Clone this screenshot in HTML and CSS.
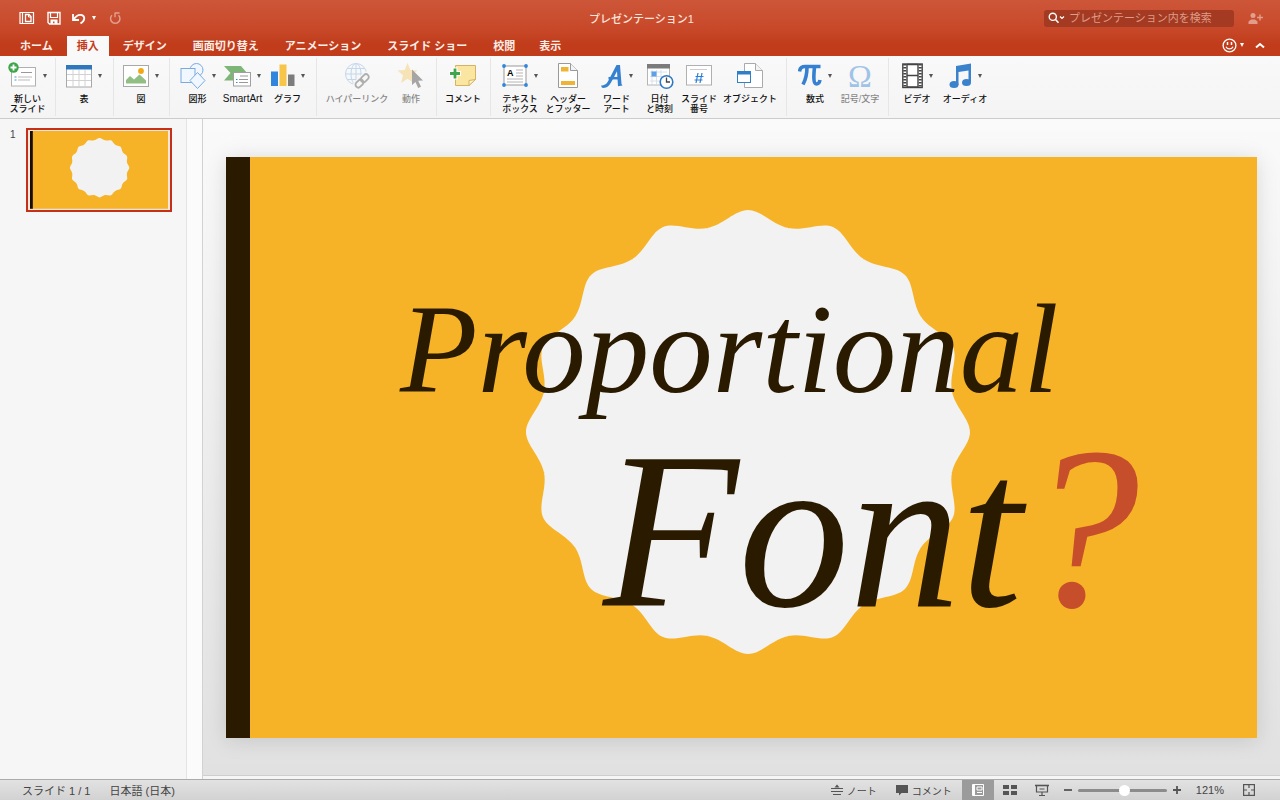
FILE: index.html
```html
<!DOCTYPE html>
<html lang="ja">
<head>
<meta charset="utf-8">
<title>プレゼンテーション1</title>
<link rel="stylesheet" href="styles.css">
</head>
<body>
<header class="titlebar">
  <div class="top-row">
    <div class="quick-access">
      <button class="icon-button" aria-label="テンプレート"><svg width="16" height="14" viewBox="0 0 16 14"><path d="M1 1.500h13.500v11H1zM3.500 1.500v11" fill="none" stroke="#fff" stroke-width="1.200"/><path d="M6.500 3.500H10l2 2v5H6.500z" fill="none" stroke="#fff" stroke-width="1.300"/><path d="M9.500 3.500V6H12" fill="none" stroke="#fff"/></svg></button>
      <button class="icon-button" aria-label="保存"><svg width="14" height="14" viewBox="0 0 14 14"><path d="M1 1.500h12v11.500H2.500L1 11.500z" fill="none" stroke="#fff" stroke-width="1.400"/><path d="M3.500 1.500v5h7v-5" fill="none" stroke="#fff" stroke-width="1.200"/><path d="M3.500 8.500h7V13H7.500v-2.500H6V13H3.500z" fill="#fff"/></svg></button>
      <button class="icon-button" aria-label="元に戻す"><svg width="15" height="13" viewBox="0 0 15 13"><path d="M2 2v6h6" fill="none" stroke="#fff" stroke-width="1.800"/><path d="M2.500 7.500C5 4 8 2 11 3.200c3 1.300 3.500 5-1.500 8.300" fill="none" stroke="#fff" stroke-width="1.800"/></svg></button>
      <span class="caret caret-light"></span>
      <button class="icon-button dim" aria-label="繰り返し"><svg width="13" height="14" viewBox="0 0 13 14"><path d="M3 4.200a4.700 4.700 0 1 0 6.500 0" fill="none" stroke="#fff" stroke-width="1.500"/><path d="M6 1.500v4.800M6 2h4.500" fill="none" stroke="#fff" stroke-width="1.400"/></svg></button>
    </div>
    <h1 class="doc-title">プレゼンテーション1</h1>
    <div class="top-right">
      <label class="search">
        <svg width="17" height="12" viewBox="0 0 17 12"><circle cx="4.800" cy="4.800" r="3.600" fill="none" stroke="#fff" stroke-width="1.400"/><path d="M7.500 7.500l3 3.300" stroke="#fff" stroke-width="1.600"/><path d="M12 4.500l2 2 2-2" fill="none" stroke="#fff" stroke-width="1.200"/></svg>
        <input class="search-input" type="text" aria-label="プレゼンテーション内を検索" placeholder="プレゼンテーション内を検索">
      </label>
      <button class="icon-button dim" aria-label="共有"><svg width="16" height="13" viewBox="0 0 16 13"><circle cx="5" cy="3.500" r="2.500" fill="#fff"/><path d="M.5 12V9.500L3 7.500h4l2.500 2V12z" fill="#fff"/><path d="M12 2.500v6M9 5.500h6" stroke="#fff" stroke-width="1.400"/></svg></button>
    </div>
  </div>
  <div class="tab-row">
    <nav class="tabs">
      <button class="tab">ホーム</button>
      <button class="tab tab-active">挿入</button>
      <button class="tab">デザイン</button>
      <button class="tab tab-wide">画面切り替え</button>
      <button class="tab">アニメーション</button>
      <button class="tab tab-wide">スライド ショー</button>
      <button class="tab">校閲</button>
      <button class="tab">表示</button>
    </nav>
    <div class="tab-tools">
      <button class="icon-button" aria-label="フィードバック"><svg width="15" height="15" viewBox="0 0 15 15"><circle cx="7.500" cy="7.500" r="6.400" fill="none" stroke="#fff" stroke-width="1.300"/><path d="M5.500 4v3M9.500 4v3" stroke="#fff" stroke-width="1.500"/><path d="M4 8.700c1.500 3 5.500 3 7 0" fill="none" stroke="#fff" stroke-width="1.300"/></svg></button>
      <span class="caret caret-light"></span>
      <button class="icon-button collapse" aria-label="リボンを折りたたむ"><svg width="10" height="7" viewBox="0 0 10 7"><path d="M1 5.500l4-3.500 4 3.500" fill="none" stroke="#fff" stroke-width="2"/></svg></button>
    </div>
  </div>
</header>

<div class="ribbon">
  <div class="group">
    <button class="tool w-55"><span class="tool-icon"><svg width="29" height="28" viewBox="0 0 29 28"><rect x="3.500" y="5.500" width="24" height="18.500" fill="#fff" stroke="#b0b0b0"/><path d="M13 10.500h11" stroke="#999"/><path d="M6.500 15h2M6.500 18h2" stroke="#4a90d9"/><path d="M10 15h14M10 18h12" stroke="#bbb"/><circle cx="5.500" cy="5.500" r="5.200" fill="#3fa54a"/><path d="M5.500 2.500v6M2.500 5.500h6" stroke="#fff" stroke-width="1.800"/></svg><span class="caret"></span></span><span class="tool-label">新しい<br>スライド</span></button>
  </div>
  <div class="group">
    <button class="tool w-58"><span class="tool-icon"><svg width="26" height="28" viewBox="0 0 26 28"><rect x=".5" y="3.500" width="25" height="21.500" fill="#fff" stroke="#a8a8a8"/><path d="M0 3h26v4.500H0z" fill="#2f78bd"/><path d="M1 12.500h24M1 18.500h24M7 8v16.500M13 8v16.500M19 8v16.500" stroke="#d2d2d2"/></svg><span class="caret"></span></span><span class="tool-label">表</span></button>
  </div>
  <div class="group">
    <button class="tool w-56"><span class="tool-icon"><svg width="26" height="28" viewBox="0 0 26 28"><rect x=".5" y="3.500" width="25" height="21" fill="#fff" stroke="#a8a8a8"/><path d="M3 21.500V18l4-4 4 3.500 5.500-5 6.500 6v3z" fill="#91bf83"/><circle cx="18" cy="9" r="2.900" fill="#f0a818"/></svg><span class="caret"></span></span><span class="tool-label">図</span></button>
  </div>
  <div class="group group-pad">
    <button class="tool w-45"><span class="tool-icon"><svg width="26" height="28" viewBox="0 0 26 28"><g fill="#f1f7fe" stroke="#7aabe0"><circle cx="16.500" cy="8" r="6.500"/><rect x="1" y="6.500" width="14" height="14"/><path d="M17.500 10.500l7.500 8-7.500 8-7.500-8z"/></g></svg><span class="caret"></span></span><span class="tool-label">図形</span></button>
    <button class="tool w-45"><span class="tool-icon"><svg width="27" height="28" viewBox="0 0 27 28"><path d="M0 4h17l6 7-6 7.500H0L6.500 11z" fill="#7eb678"/><rect x="9.500" y="10.500" width="17" height="13.500" fill="#fff" stroke="#a0a0a0"/><path d="M16 14h8M15 17.500h9M15 20.500h9" stroke="#999"/><path d="M12 17.500h1.500M12 20.500h1.500" stroke="#3a87d6"/></svg><span class="caret"></span></span><span class="tool-label tool-label-latin">SmartArt</span></button>
    <button class="tool w-45"><span class="tool-icon"><svg width="24" height="28" viewBox="0 0 24 28"><path d="M0 9.500h7V24H0z" fill="#2f86dc"/><path d="M8.500 2.500h7V24h-7z" fill="#f7c548"/><path d="M17 12.500h6.500V24H17z" fill="#7c7c7c"/></svg><span class="caret"></span></span><span class="tool-label">グラフ</span></button>
  </div>
  <div class="group group-pad">
    <button class="tool w-70" disabled><span class="tool-icon"><svg width="27" height="28" viewBox="0 0 27 28"><g fill="none" stroke="#8fb9e6"><circle cx="12" cy="12" r="10.500"/><ellipse cx="12" cy="12" rx="5" ry="10.500"/><path d="M12 1.500v21M1.500 12h21M3 6.500h18M3 17.500h18"/></g><path d="M14 23l8.500-8.500" stroke="#f7f7f7" stroke-width="10" stroke-linecap="round"/><g fill="none" stroke="#666" stroke-width="1.800"><rect x="-4.500" y="-2.800" width="9" height="5.600" rx="2.800" transform="translate(15.500 21.500) rotate(-45)"/><rect x="-4.500" y="-2.800" width="9" height="5.600" rx="2.800" transform="translate(20.800 16.200) rotate(-45)"/></g></svg></span><span class="tool-label">ハイパーリンク</span></button>
    <button class="tool w-38" disabled><span class="tool-icon"><svg width="28" height="28" viewBox="0 0 28 28"><path d="M10.500 1l2.800 7 7.200.5-5.500 4.800 1.800 7.700-6.300-4.200L4.200 21 6 13.300.5 8.500 7.700 8z" fill="#f5cf78"/><path d="M15 7.500l11 11-4.800.2 2.800 6-2.800 1.300-2.700-6L15 23z" fill="#555"/></svg></span><span class="tool-label">動作</span></button>
  </div>
  <div class="group">
    <button class="tool w-54"><span class="tool-icon"><svg width="28" height="28" viewBox="0 0 28 28"><path d="M6.500 3.500h20v14l-6.500 6H6.500z" fill="#fae6a0" stroke="#d4b462"/><path d="M26.500 17.500L20 18.500v5z" fill="#fff4cb" stroke="#d4b462"/><path d="M6 5.500v12M0 11.500h12" stroke="#fff" stroke-width="5"/><path d="M6 6.500v10M1 11.500h10" stroke="#3fa54a" stroke-width="2.800"/></svg></span><span class="tool-label">コメント</span></button>
  </div>
  <div class="group group-pad">
    <button class="tool w-48"><span class="tool-icon"><svg width="26" height="28" viewBox="0 0 26 28"><rect x="2" y="4" width="22" height="19" fill="#fff" stroke="#999"/><path d="M14 8h7M14 11h7M14 14h7M5 17h16M5 20h16" stroke="#b4b4b4"/><text x="5" y="14" class="glyph-small">A</text><g fill="#2f86dc"><circle cx="2" cy="4" r="1.900"/><circle cx="24" cy="4" r="1.900"/><circle cx="2" cy="23" r="1.900"/><circle cx="24" cy="23" r="1.900"/></g></svg><span class="caret"></span></span><span class="tool-label">テキスト<br>ボックス</span></button>
    <button class="tool w-48"><span class="tool-icon"><svg width="22" height="28" viewBox="0 0 22 28"><path d="M1.500 1.500h12l7 7v17h-19z" fill="#fff" stroke="#999"/><path d="M13.500 1.500v7h7" fill="#f4f4f4" stroke="#999"/><path d="M4 5h7.500v4.500H4zM4 19h14v4H4z" fill="#efb433"/></svg></span><span class="tool-label">ヘッダー<br>とフッター</span></button>
    <button class="tool w-49"><span class="tool-icon"><svg width="22" height="28" viewBox="0 0 22 28"><path d="M0 23.500c4.500 0 6-2 8.500-7L15.500 3h3.500l1.500 19 1 1.500-4.500.8-1-15-5 9.500c-3 6-5.500 7.500-10 7z" fill="#3580d0"/><path d="M7.500 16.200h10" stroke="#3580d0" stroke-width="2.500"/></svg><span class="caret"></span></span><span class="tool-label">ワード<br>アート</span></button>
    <button class="tool w-37"><span class="tool-icon"><svg width="28" height="28" viewBox="0 0 28 28"><rect x="1.500" y="3" width="22" height="20" fill="#fff" stroke="#b5b5b5"/><path d="M1 2h23v4.500H1z" fill="#7b7b7b"/><path d="M4 10h17M4 14.500h17M4 19h17M6 8v15M10.500 8v15M15 8v15" stroke="#cfdae6" stroke-width=".800"/><path d="M5.500 9.500h5v5h-5z" fill="#5fa1e6"/><circle cx="20.500" cy="20" r="6.300" fill="#fff" stroke="#2d79c4" stroke-width="1.600"/><path d="M20.500 15.500V20H24" fill="none" stroke="#444" stroke-width="1.300"/></svg></span><span class="tool-label">日付<br>と時刻</span></button>
    <button class="tool w-42"><span class="tool-icon"><svg width="26" height="28" viewBox="0 0 26 28"><rect x=".5" y="3.500" width="25" height="19.500" fill="#fff" stroke="#b0b0b0"/><path d="M4 7.500h17" stroke="#ccc"/><path d="M12 11l-2 10M16 11l-2 10M9.500 14.500h8M8.500 18h8" fill="none" stroke="#2f7fd3" stroke-width="1.200"/></svg></span><span class="tool-label">スライド<br>番号</span></button>
    <button class="tool w-60"><span class="tool-icon"><svg width="28" height="28" viewBox="0 0 28 28"><path d="M8.500 1.500h11l7 7v17h-18z" fill="#fff" stroke="#aaa"/><path d="M19.500 1.500v7h7" fill="#f4f4f4" stroke="#aaa"/><rect x="1.500" y="9.500" width="13" height="11" fill="#fff" stroke="#2f7fc9"/><path d="M1 9h14v3.500H1z" fill="#2f7fc9"/></svg></span><span class="tool-label">オブジェクト</span></button>
  </div>
  <div class="group group-pad">
    <button class="tool w-46"><span class="tool-icon"><svg width="24" height="28" viewBox="0 0 24 28"><path d="M1.500 9.500C2 5.500 4 4.500 7 4.500h15.500" fill="none" stroke="#3580d0" stroke-width="3.600"/><path d="M9 5c0 8-1 12-4 17.500M16.500 5c-.800 8-1.500 17 2 17 2 0 3-1.500 3.500-4" fill="none" stroke="#3580d0" stroke-width="3.600" stroke-linejoin="round"/></svg><span class="caret"></span></span><span class="tool-label">数式</span></button>
    <button class="tool w-44" disabled><span class="tool-icon glyph-omega">Ω</span><span class="tool-label">記号/文字</span></button>
  </div>
  <div class="group group-pad">
    <button class="tool w-46"><span class="tool-icon"><svg width="21" height="28" viewBox="0 0 21 28"><rect x=".8" y="2" width="19.400" height="23.500" fill="#fff" stroke="#444" stroke-width="1.400"/><path d="M2.800 2v23.500M18.200 2v23.500" stroke="#444" stroke-width="3" stroke-dasharray="1.500 1.500"/><path d="M5 2v23.500M16 2v23.500M5 13.500h11M5 2.500h11M5 25h11" stroke="#444" stroke-width="1.400"/></svg><span class="caret"></span></span><span class="tool-label">ビデオ</span></button>
    <button class="tool w-50"><span class="tool-icon"><svg width="23" height="28" viewBox="0 0 23 28"><path d="M7 4l15-2.500v19h-2.500V8.500L9.500 10v13H7z" fill="#3a82cc"/><ellipse cx="5" cy="22.500" rx="4.500" ry="3.500" fill="#3a82cc"/><ellipse cx="17.500" cy="20.500" rx="4.500" ry="3.500" fill="#3a82cc"/></svg><span class="caret"></span></span><span class="tool-label">オーディオ</span></button>
  </div>
</div>

<main class="workspace">
  <aside class="thumbnails">
    <span class="thumb-number">1</span>
    <button class="thumb" aria-label="スライド 1">
      <svg class="thumb-art" viewBox="0 0 1031 581"><rect width="1031" height="581" fill="#f7b327"/><rect width="21" height="581" fill="#180d00"/><use href="#seal" x="520" y="275" fill="#f2f2f2"/></svg>
    </button>
  </aside>
  <div class="splitter"></div>
  <section class="stage">
    <svg class="slide" viewBox="0 0 1031 581">
      <defs>
        <path id="lobe" d="M0 0L-40.600-204C-25-207-13-222 0-222S25-207 40.600-204Z"/>
        <g id="quarter"><use href="#lobe"/><use href="#lobe" transform="rotate(22.500)"/><use href="#lobe" transform="rotate(45)"/><use href="#lobe" transform="rotate(67.500)"/></g>
        <g id="seal"><circle r="207"/><use href="#quarter"/><use href="#quarter" transform="rotate(90)"/><use href="#quarter" transform="rotate(180)"/><use href="#quarter" transform="rotate(270)"/></g>
      </defs>
      <rect width="1031" height="581" fill="#f7b327"/>
      <rect width="24" height="581" fill="#291a00"/>
      <use href="#seal" x="522" y="275" fill="#f2f2f2"/>
      <text class="slide-line-1" x="174" y="235">Proportional</text>
      <text class="slide-line-2" x="377" y="449">Font</text>
      <text class="slide-mark" x="798" y="449">?</text>
    </svg>
  </section>
</main>

<footer class="status">
  <span>スライド 1 / 1</span>
  <span>日本語 (日本)</span>
  <div class="status-right">
    <button class="status-button"><svg width="12" height="12" viewBox="0 0 12 12"><path d="M3.500 3.500L6 .5l2.500 3z" fill="#555"/><path d="M0 4.500h12M0 7.500h12M2 10.500h8" stroke="#555" stroke-width="1.200"/></svg>ノート</button>
    <button class="status-button"><svg width="12" height="12" viewBox="0 0 12 12"><path d="M0 1h12v8H5.500L3 11.500V9H0z" fill="#555"/></svg>コメント</button>
    <div class="views">
      <button class="view view-active" aria-label="標準"><svg width="14" height="12" viewBox="0 0 14 12"><path d="M1.500.5h11v11h-11z" fill="none" stroke="#fff"/><path d="M2 1h2v10H2z" fill="#fff"/><path d="M6 3h5v3H6zM6 8.500h5" fill="none" stroke="#fff"/></svg></button>
      <button class="view" aria-label="スライド一覧"><svg width="14" height="12" viewBox="0 0 14 12"><path d="M0 1h6v4H0zM8 1h6v4H8zM0 7h6v4H0zM8 7h6v4H8z" fill="#555"/></svg></button>
      <button class="view" aria-label="スライド ショー"><svg width="14" height="12" viewBox="0 0 14 12"><path d="M0 1.500h14" stroke="#555" stroke-width="1.600"/><path d="M1.500 2v6h11V2M7 8v3M4 11.500h6M4.500 5h5" fill="none" stroke="#555" stroke-width="1.200"/></svg></button>
    </div>
    <div class="zoom">
      <button class="zoom-step" aria-label="縮小"><svg width="8" height="8" viewBox="0 0 8 8"><path d="M0 4h8" stroke="#555" stroke-width="1.800"/></svg></button>
      <input class="zoom-slider" type="range" min="0" max="100" value="53" aria-label="ズーム">
      <button class="zoom-step" aria-label="拡大"><svg width="8" height="8" viewBox="0 0 8 8"><path d="M0 4h8M4 0v8" stroke="#555" stroke-width="1.800"/></svg></button>
    </div>
    <span class="zoom-value">121%</span>
    <button class="icon-button" aria-label="ウィンドウに合わせる"><svg width="12" height="12" viewBox="0 0 12 12"><rect x=".6" y=".6" width="10.800" height="10.800" fill="none" stroke="#555" stroke-width="1.200"/><path d="M6 1v3M6 8v3M1 6h3M8 6h3" stroke="#555" stroke-width="1.200"/></svg></button>
  </div>
</footer>
</body>
</html>
```

FILE: styles.css
```css
* { box-sizing: border-box; }

body {
  margin: 0;
  height: 100vh;
  display: flex;
  flex-direction: column;
  overflow: hidden;
  font-family: "Liberation Sans", "Noto Sans CJK JP", sans-serif;
  font-size: 11px;
  color: #222;
  background: #f6f6f6;
}

button {
  margin: 0;
  padding: 0;
  border: 0;
  background: none;
  font: inherit;
  color: inherit;
}

svg { display: block; flex: none; }

/* Title bar and tabs */
.titlebar {
  flex: none;
  background: linear-gradient(#cd5639, #c8492a 50%, #c03c1b 80%, #c03c1b);
  color: #fff;
}
.top-row {
  display: grid;
  grid-template-columns: 1fr auto 1fr;
  align-items: center;
  height: 36px;
  padding: 0 16px 0 19px;
}
.quick-access { display: flex; align-items: center; }
.quick-access .icon-button:nth-child(2) { margin-left: 12px; }
.quick-access .icon-button:nth-child(3) { margin-left: 10px; }
.quick-access .caret { margin: 0 13px 0 6px; }
.icon-button { display: flex; align-items: center; }
.dim { opacity: 0.45; }
.doc-title { margin: 0; font-size: 11px; font-weight: 500; color: #fbe5dd; }
.top-right { display: flex; justify-content: flex-end; align-items: center; gap: 14px; }
.search {
  display: flex;
  align-items: center;
  gap: 4px;
  width: 190px;
  height: 17px;
  padding: 0 4px;
  border-radius: 3px;
  background: #a33a21;
}
.search-input {
  flex: 1;
  min-width: 0;
  height: 16px;
  padding: 0;
  border: 0;
  outline: 0;
  background: none;
  font: inherit;
  color: #fff;
}
.search-input::placeholder { color: #df9b89; opacity: 1; }
.tab-row { display: flex; justify-content: space-between; height: 20px; padding: 0 15px 0 8px; }
.tabs { display: flex; }
.tab { padding: 0 12px; font-weight: 700; line-height: 20px; color: #fdeee8; white-space: nowrap; }
.tab:first-child { padding-right: 14px; }
.tab-wide { padding: 0 14px; }
.tab-active { padding: 0 10px; background: #f9f9f9; color: #c43e1c; }
.tab-active + .tab { padding-left: 14px; }
.tab-tools { display: flex; align-items: center; gap: 3px; padding-bottom: 2px; }
.collapse { margin-left: 8px; }

.caret {
  flex: none;
  width: 0;
  height: 0;
  border: 2px solid transparent;
  border-top: 4px solid #555;
  border-bottom: 0;
}
.caret-light { border-top-color: #fff; }

/* Ribbon */
.ribbon {
  flex: none;
  display: flex;
  height: 63px;
  padding: 2px 0;
  background: linear-gradient(#f9f9f9, #f4f4f4);
  border-bottom: 1px solid #cccccc;
}
.group { display: flex; box-shadow: 1px 0 #e6e6e6; }
.group:last-child { box-shadow: none; }
.group-pad { padding: 0 6px; }
.tool { display: flex; flex-direction: column; align-items: center; padding-top: 4px; gap: 4px; }
.tool:disabled { opacity: 0.5; }
.tool-icon { display: flex; align-items: center; gap: 6px; height: 28px; }
.tool-label { font-size: 9px; line-height: 10px; font-weight: 500; white-space: nowrap; color: #111; }
.tool-label-latin { font-size: 10px; }
.glyph-small { font-size: 9px; font-weight: 700; }
.glyph-omega { font-family: "Liberation Serif", serif; font-size: 32px; line-height: 28px; color: #4a90d9; }
.w-37 { width: 37px; }
.w-38 { width: 38px; }
.w-42 { width: 42px; }
.w-44 { width: 44px; }
.w-45 { width: 45px; }
.w-46 { width: 46px; }
.w-48 { width: 48px; }
.w-49 { width: 49px; }
.w-50 { width: 50px; }
.w-54 { width: 54px; }
.w-55 { width: 55px; }
.w-56 { width: 56px; }
.w-58 { width: 58px; }
.w-60 { width: 60px; }
.w-70 { width: 70px; }

/* Workspace */
.workspace { flex: 1; display: flex; min-height: 0; }
.thumbnails {
  display: flex;
  align-items: flex-start;
  gap: 10px;
  width: 187px;
  padding: 9px 14px 0 10px;
  border-right: 1px solid #e4e4e4;
}
.thumb-number { width: 6px; line-height: 14px; font-size: 10px; color: #444; }
.thumb { flex: 1; padding: 1px 2px; border: 2px solid #c43018; background: #fbe6dc; }
.thumb-art { width: 100%; height: auto; }
.splitter { width: 16px; background: #fbfbfb; border-right: 1px solid #d2d2d2; }
.stage {
  flex: 1;
  display: flex;
  align-items: center;
  justify-content: center;
  margin-bottom: 3px;
  padding: 0 23px;
  background: linear-gradient(#fafafa, #e1e1e1);
  border-bottom: 1px solid #cfcfcf;
}
.slide { width: 100%; box-shadow: 0 2px 20px rgba(0, 0, 0, 0.13); }
.slide text { font-family: "Liberation Serif", serif; font-style: italic; fill: #291a00; }
.slide .slide-line-1 { font-size: 127px; }
.slide .slide-line-2 { font-size: 222px; }
.slide .slide-mark { font-size: 231px; fill: #c74e2b; }

/* Status bar */
.status {
  flex: none;
  display: flex;
  align-items: center;
  gap: 19px;
  height: 21px;
  padding: 0 25px 0 22px;
  background: linear-gradient(#e2e2e2, #d2d2d2);
  border-top: 1px solid #ababab;
  color: #444;
}
.status-right { display: flex; align-items: center; margin-left: auto; height: 100%; }
.status-button { display: flex; align-items: center; gap: 4px; margin-right: 19px; font-size: 10px; }
.status-button + .views { margin-left: -9px; }
.views { display: flex; height: 100%; }
.view { display: flex; align-items: center; justify-content: center; width: 32px; }
.view-active { background: #9b9b9b; }
.zoom { display: flex; align-items: center; gap: 6px; margin-left: 6px; }
.zoom-slider { appearance: none; width: 89px; height: 12px; margin: 0; background: none; }
.zoom-slider::-webkit-slider-runnable-track { height: 3px; border-radius: 2px; background: #8c8c8c; }
.zoom-slider::-webkit-slider-thumb {
  appearance: none;
  width: 11px;
  height: 11px;
  margin-top: -4px;
  border-radius: 50%;
  background: #fff;
}
.zoom-value { margin: 0 19px 0 15px; }
```
